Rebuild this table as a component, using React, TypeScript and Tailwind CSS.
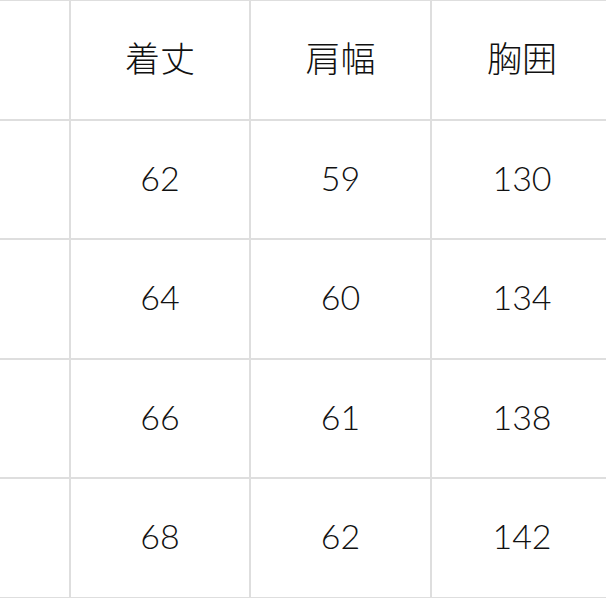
const header = ["", "着丈", "肩幅", "胸囲"];
const rows = [
  ["", "62", "59", "130"],
  ["", "64", "60", "134"],
  ["", "66", "61", "138"],
  ["", "68", "62", "142"],
];

export default function App() {
  return (
    <div className="w-[606px] h-[606px] overflow-hidden bg-white">
      <div className="grid grid-cols-[69px_178px_179px_180px] gap-[2px] bg-[#dedede] py-[1px] w-[616px] text-[#111]">
        {header.map((cell, j) => (
          <div
            key={`h-${j}`}
            className="h-[117.5px] bg-white flex items-center justify-center text-[35px] font-light pb-[6px]"
            style={{ fontFamily: '"Noto Sans CJK JP", sans-serif' }}
          >
            {cell}
          </div>
        ))}
        {rows.map((row, i) =>
          row.map((cell, j) => (
            <div
              key={`${i}-${j}`}
              className="h-[117.5px] bg-white flex items-center justify-center text-[34px] font-light pb-[4px]"
              style={{ fontFamily: 'Lato, sans-serif' }}
            >
              {cell}
            </div>
          ))
        )}
      </div>
    </div>
  );
}
